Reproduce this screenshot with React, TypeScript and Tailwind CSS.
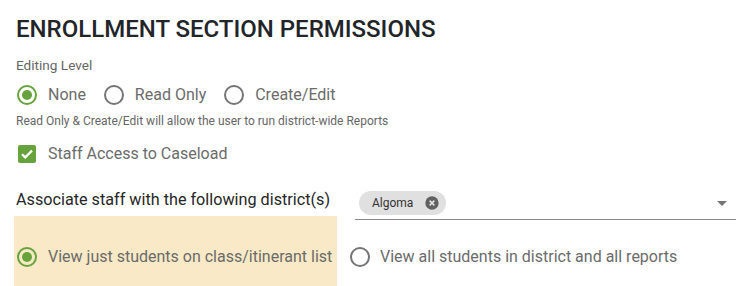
import * as React from "react";

const GREEN = "#66a33c";

function RadioIcon({ checked }: { checked: boolean }) {
    const color = checked ? GREEN : "#757575";
    return (
        <svg width="24" height="24" viewBox="0 0 24 24" className="shrink-0">
            <circle cx="12" cy="12" r="9" fill="none" stroke={color} strokeWidth="2" />
            {checked && <circle cx="12" cy="12" r="5" fill={color} />}
        </svg>
    );
}

function Radio({ label, checked = false, gap = "ml-[9px]" }: { label: string; checked?: boolean; gap?: string }) {
    return (
        <label className="flex items-center h-6">
            <RadioIcon checked={checked} />
            <span className={`${gap} text-[16px] leading-6 text-[#6b6b6b]`}>{label}</span>
        </label>
    );
}

export default function App() {
    return (
        <div className="w-[748px] h-[286px] overflow-hidden bg-white pt-[13px] pl-[14px] pr-3 font-['Roboto',sans-serif]">
            <h1 className="pl-[2px] text-[24px] leading-8 font-medium text-[#212529]">
                ENROLLMENT SECTION PERMISSIONS
            </h1>
            <p className="pl-[2px] mt-[12px] text-[13.6px] leading-4 text-[#666]">Editing Level</p>

            <div className="mt-[10px] flex items-center gap-[16px] pl-[1px]">
                <Radio label="None" checked />
                <Radio label="Read Only" />
                <Radio label="Create/Edit" />
            </div>

            <p className="pl-[2px] mt-[6px] text-[12px] leading-4 text-[#666]">
                Read Only &amp; Create/Edit will allow the user to run district-wide Reports
            </p>

            <div className="mt-[13px] flex items-center h-6 pl-[1px]">
                <svg width="24" height="24" viewBox="0 0 24 24" className="shrink-0">
                    <rect x="3" y="3" width="18" height="18" rx="2" fill={GREEN} />
                    <path d="M7 12.2l3.2 3.2L17 8.6" fill="none" stroke="#fff" strokeWidth="2.2" />
                </svg>
                <span className="ml-[9px] text-[16px] leading-6 text-[#6b6b6b]">Staff Access to Caseload</span>
            </div>

            <div className="mt-[22px] flex">
                <div className="w-[323px] shrink-0">
                    <p className="pl-[2px] text-[16.2px] leading-6 text-[#262626]">
                        Associate staff with the following district(s)
                    </p>
                    <div className="mt-[4px] bg-[#f9e9c6] pl-[1px] pt-[29px] pb-[29px]">
                        <Radio label="View just students on class/itinerant list" checked />
                    </div>
                </div>

                <div className="ml-[11px] flex-1">
                    <div className="ml-[7px] flex items-start justify-between border-b border-[#8a8a8a] pt-[3px] pb-[4px] pl-1">
                        <span className="flex items-center h-6 rounded-full bg-[#e0e0e0] pl-[13px] pr-[6px]">
                            <span className="text-[12px] text-[#333]">Algoma</span>
                            <svg width="16" height="16" viewBox="0 0 24 24" className="ml-[11px]">
                                <circle cx="12" cy="12" r="10" fill="#616161" />
                                <path d="M8.5 8.5l7 7M15.5 8.5l-7 7" stroke="#e0e0e0" strokeWidth="2.4" />
                            </svg>
                        </span>
                        <svg width="24" height="24" viewBox="0 0 24 24" className="mr-[2px]">
                            <path d="M7 10l5 5 5-5z" fill="#757575" />
                        </svg>
                    </div>
                    <div className="mt-[25px]">
                        <Radio label="View all students in district and all reports" gap="ml-[8px]" />
                    </div>
                </div>
            </div>
        </div>
    );
}
